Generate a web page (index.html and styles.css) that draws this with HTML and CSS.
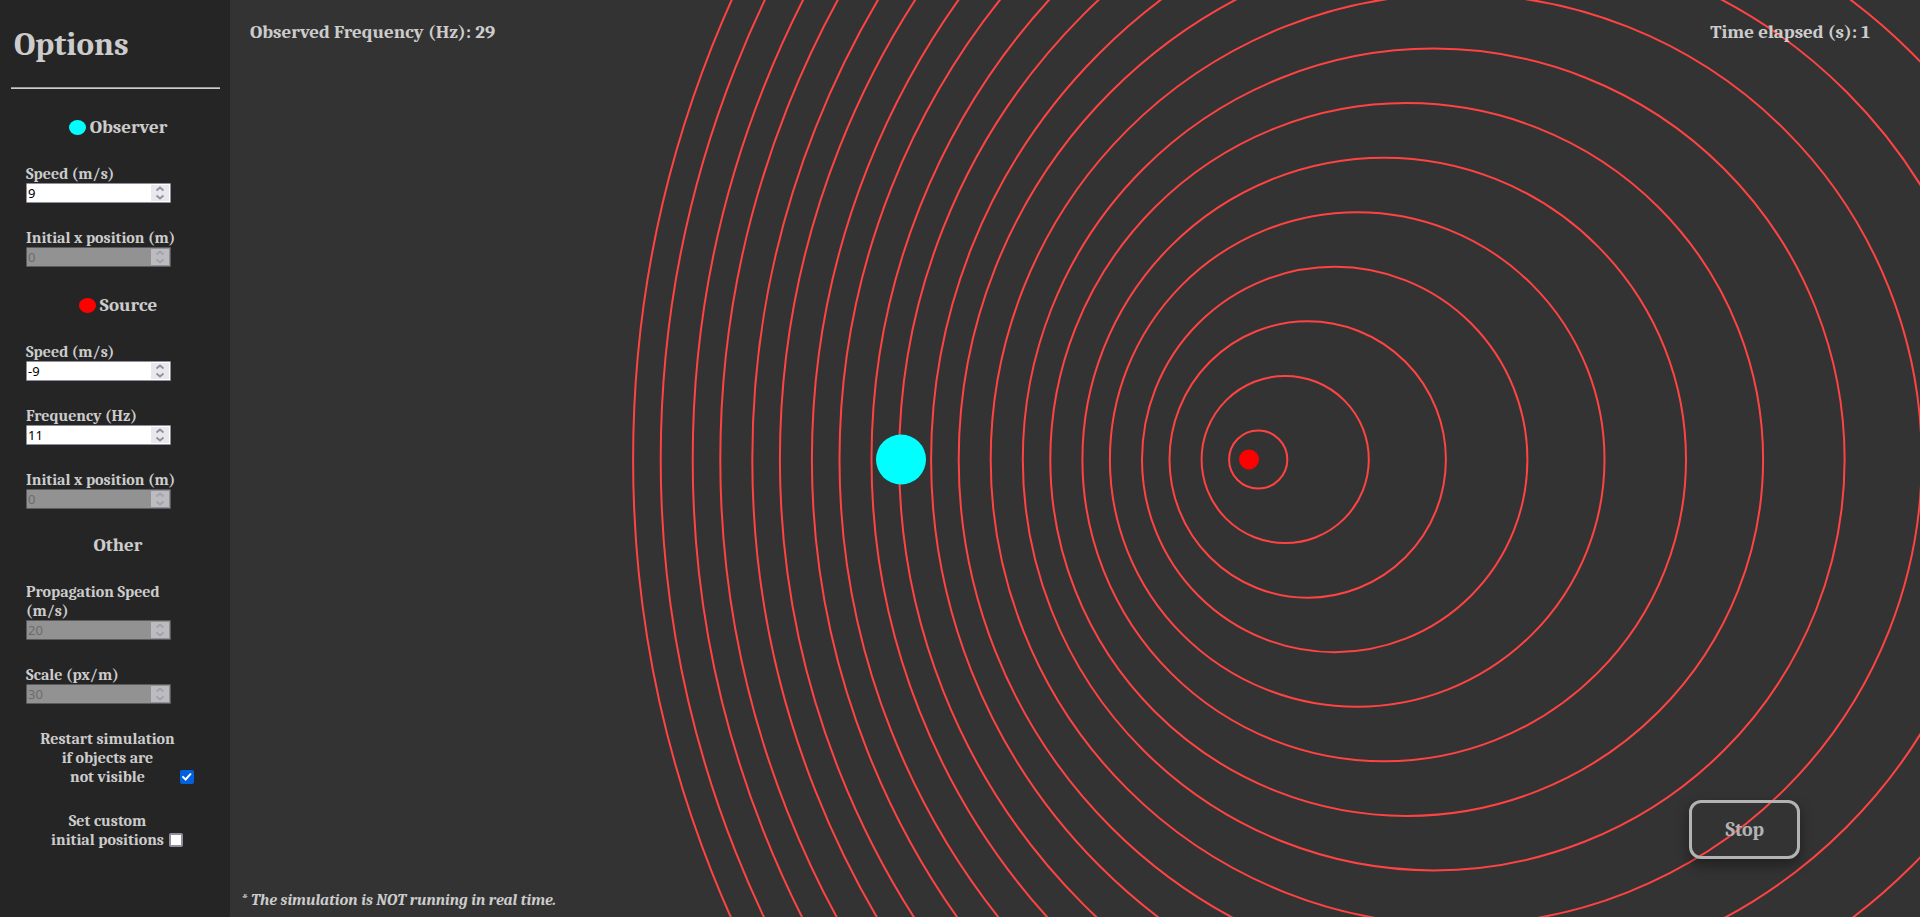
FILE: index.html
```html
<!DOCTYPE html>
<html lang="en">
<head>
<meta charset="utf-8">
<meta name="viewport" content="width=device-width, initial-scale=1">
<title>Doppler effect simulation</title>
<link rel="stylesheet" href="styles.css">
</head>
<body>
<svg class="defs" aria-hidden="true">
  <symbol id="arrows" viewBox="0 0 18 16">
    <path d="M5.500 5.500 L9 2.500 L12.500 5.500 M5.500 10.500 L9 13.500 L12.500 10.500" fill="none" stroke="currentColor" stroke-width="1.800"/>
  </symbol>
</svg>
<aside class="sidebar">
  <h1 class="title">Options</h1>
  <hr class="rule">
  <form class="options">
    <h3 class="group"><span class="dot dot-observer"></span>Observer</h3>
    <div class="field">
      <label for="obs-speed">Speed (m/s)</label>
      <div class="number"><input id="obs-speed" type="number" value="9"><svg class="spin"><use href="#arrows"/></svg></div>
    </div>
    <div class="field">
      <label for="obs-x">Initial x position (m)</label>
      <div class="number"><input id="obs-x" type="number" value="0" disabled><svg class="spin"><use href="#arrows"/></svg></div>
    </div>
    <h3 class="group group-source"><span class="dot dot-source"></span>Source</h3>
    <div class="field">
      <label for="src-speed">Speed (m/s)</label>
      <div class="number"><input id="src-speed" type="number" value="-9"><svg class="spin"><use href="#arrows"/></svg></div>
    </div>
    <div class="field">
      <label for="src-freq">Frequency (Hz)</label>
      <div class="number"><input id="src-freq" type="number" value="11"><svg class="spin"><use href="#arrows"/></svg></div>
    </div>
    <div class="field">
      <label for="src-x">Initial x position (m)</label>
      <div class="number"><input id="src-x" type="number" value="0" disabled><svg class="spin"><use href="#arrows"/></svg></div>
    </div>
    <h3 class="group">Other</h3>
    <div class="field">
      <label for="prop">Propagation Speed (m/s)</label>
      <div class="number"><input id="prop" type="number" value="20" disabled><svg class="spin"><use href="#arrows"/></svg></div>
    </div>
    <div class="field">
      <label for="scale">Scale (px/m)</label>
      <div class="number"><input id="scale" type="number" value="30" disabled><svg class="spin"><use href="#arrows"/></svg></div>
    </div>
    <div class="check">
      <label for="restart">Restart simulation<br>if objects are<br>not visible</label>
      <input id="restart" type="checkbox" checked>
    </div>
    <div class="check">
      <label for="custom">Set custom<br>initial positions</label>
      <input id="custom" type="checkbox">
    </div>
  </form>
</aside>
<main class="stage">
  <svg class="waves" viewBox="0 0 1690 917" preserveAspectRatio="xMidYMid slice" role="img" aria-label="Sound waves, source and observer">
    <g class="wave">
      <circle cx="1028.2" cy="459.5" r="29.1"/>
      <circle cx="1055.2" cy="459.5" r="83.6"/>
      <circle cx="1077.7" cy="459.5" r="138.2"/>
      <circle cx="1104.7" cy="459.5" r="192.7"/>
      <circle cx="1127.2" cy="459.5" r="247.3"/>
      <circle cx="1154.2" cy="459.5" r="301.8"/>
      <circle cx="1176.7" cy="459.5" r="356.4"/>
      <circle cx="1203.7" cy="459.5" r="410.9"/>
      <circle cx="1226.2" cy="459.5" r="465.5"/>
      <circle cx="1248.7" cy="459.5" r="520"/>
      <circle cx="1275.7" cy="459.5" r="574.6"/>
      <circle cx="1298.2" cy="459.5" r="629.1"/>
      <circle cx="1325.2" cy="459.5" r="683.7"/>
      <circle cx="1347.7" cy="459.5" r="738.2"/>
      <circle cx="1374.7" cy="459.5" r="792.8"/>
      <circle cx="1397.2" cy="459.5" r="847.3"/>
      <circle cx="1424.2" cy="459.5" r="901.9"/>
      <circle cx="1446.7" cy="459.5" r="956.4"/>
      <circle cx="1473.7" cy="459.5" r="1011"/>
      <circle cx="1496.2" cy="459.5" r="1065.5"/>
      <circle cx="1523.2" cy="459.5" r="1120.1"/>
    </g>
    <circle class="source" cx="1019" cy="459.5" r="10"/>
    <circle class="observer" cx="671" cy="459.5" r="25"/>
  </svg>
  <header class="readouts">
    <span>Observed Frequency (Hz): 29</span>
    <span>Time elapsed (s): 1</span>
  </header>
  <footer class="bottom">
    <button class="stop" type="button">Stop</button>
    <p class="note">* The simulation is NOT running in real time.</p>
  </footer>
</main>
</body>
</html>
```
FILE: styles.css
```css
* { box-sizing: border-box; }

body {
  margin: 0;
  min-height: 100vh;
  display: flex;
  background: #333;
  color: #ccc;
  font: bold 16px/19px Cambria, Caladea, "Liberation Serif", serif;
}

.defs { position: absolute; width: 0; height: 0; }

.sidebar {
  flex: 0 0 230px;
  padding: 24px 0;
  background: #252525;
}

.title {
  margin: 0 14px;
  font-size: 33px;
  line-height: 40px;
}

.rule {
  margin: 23px 10px 27px 11px;
  border: 0;
  border-top: 1px solid #9a9a9a;
  border-bottom: 1px solid #ccc;
}

.options {
  display: flex;
  flex-direction: column;
  gap: 25px;
}

.group {
  display: flex;
  justify-content: center;
  align-items: center;
  gap: 4px;
  margin: 0 0 1px;
  padding-left: 6px;
  font-size: 19px;
  line-height: 22px;
}
.group-source { margin: 2px 0 1px; }

.dot {
  width: 17px;
  height: 15px;
  border-radius: 50%;
}
.dot-observer { background: cyan; }
.dot-source { background: red; }

.field {
  display: flex;
  flex-direction: column;
  padding: 0 45px 0 26px;
}
.field label,
.check label {
  margin: 1px 0 -1px;
}

.number {
  position: relative;
  width: 145px;
}
.number input {
  display: block;
  width: 100%;
  height: 20px;
  padding: 0 20px 0 1px;
  border: 1px solid #8f8f9d;
  border-radius: 1px;
  background: #fff;
  color: #000;
  font: 13px/18px "Noto Sans", "Open Sans", sans-serif;
  appearance: textfield;
}
.number input::-webkit-inner-spin-button { appearance: none; }
.spin {
  position: absolute;
  top: 2px;
  right: 2px;
  width: 18px;
  height: 16px;
  background: #e9e9ed;
  color: #8f8f9d;
}
.number input:disabled {
  background: #929292;
  border-color: #5a5a61;
  color: #6c6c6c;
}
.number input:disabled + .spin {
  background: #bcbcc0;
  color: #a2a2a9;
}

.check {
  display: flex;
  justify-content: center;
  align-items: flex-end;
  gap: 5px;
  padding-left: 4px;
  text-align: center;
}
.check input {
  flex: none;
  width: 14px;
  height: 14px;
  margin: 0 0 2px;
  display: grid;
  place-items: center;
  appearance: none;
  border: 2px solid #8f8f9d;
  border-radius: 2px;
  background: #fff;
}
.check input:checked {
  border-color: #0060df;
  background: #0060df;
}
.check input:checked::after {
  content: "";
  width: 10px;
  height: 8px;
  background: #fff;
  clip-path: polygon(0 50%, 15% 34%, 38% 62%, 85% 0, 100% 14%, 40% 100%);
}

.stage {
  position: relative;
  flex: 1;
  min-width: 0;
  display: flex;
  flex-direction: column;
  justify-content: space-between;
  overflow: hidden;
}
.waves {
  position: absolute;
  inset: 0;
  width: 100%;
  height: 100%;
}
.wave { fill: none; stroke: #ff4343; stroke-width: 2; }
.source { fill: red; }
.observer { fill: cyan; }

.readouts, .bottom { position: relative; }
.readouts {
  display: flex;
  justify-content: space-between;
  padding: 21px 50px 0 20px;
  font-size: 19px;
  line-height: 22px;
}

.bottom {
  display: flex;
  flex-direction: column;
  gap: 32px;
  padding: 0 120px 7px 11px;
}
.stop {
  align-self: flex-end;
  padding: 16px 33px 15px;
  border: 3px solid #b3b3b3;
  border-radius: 12px;
  background: transparent;
  box-shadow: 0 6px 14px rgba(0, 0, 0, 0.4);
  color: #b3b3b3;
  font: inherit;
  font-size: 20px;
  line-height: 22px;
}
.note {
  margin: 0;
  font-style: italic;
}
```
